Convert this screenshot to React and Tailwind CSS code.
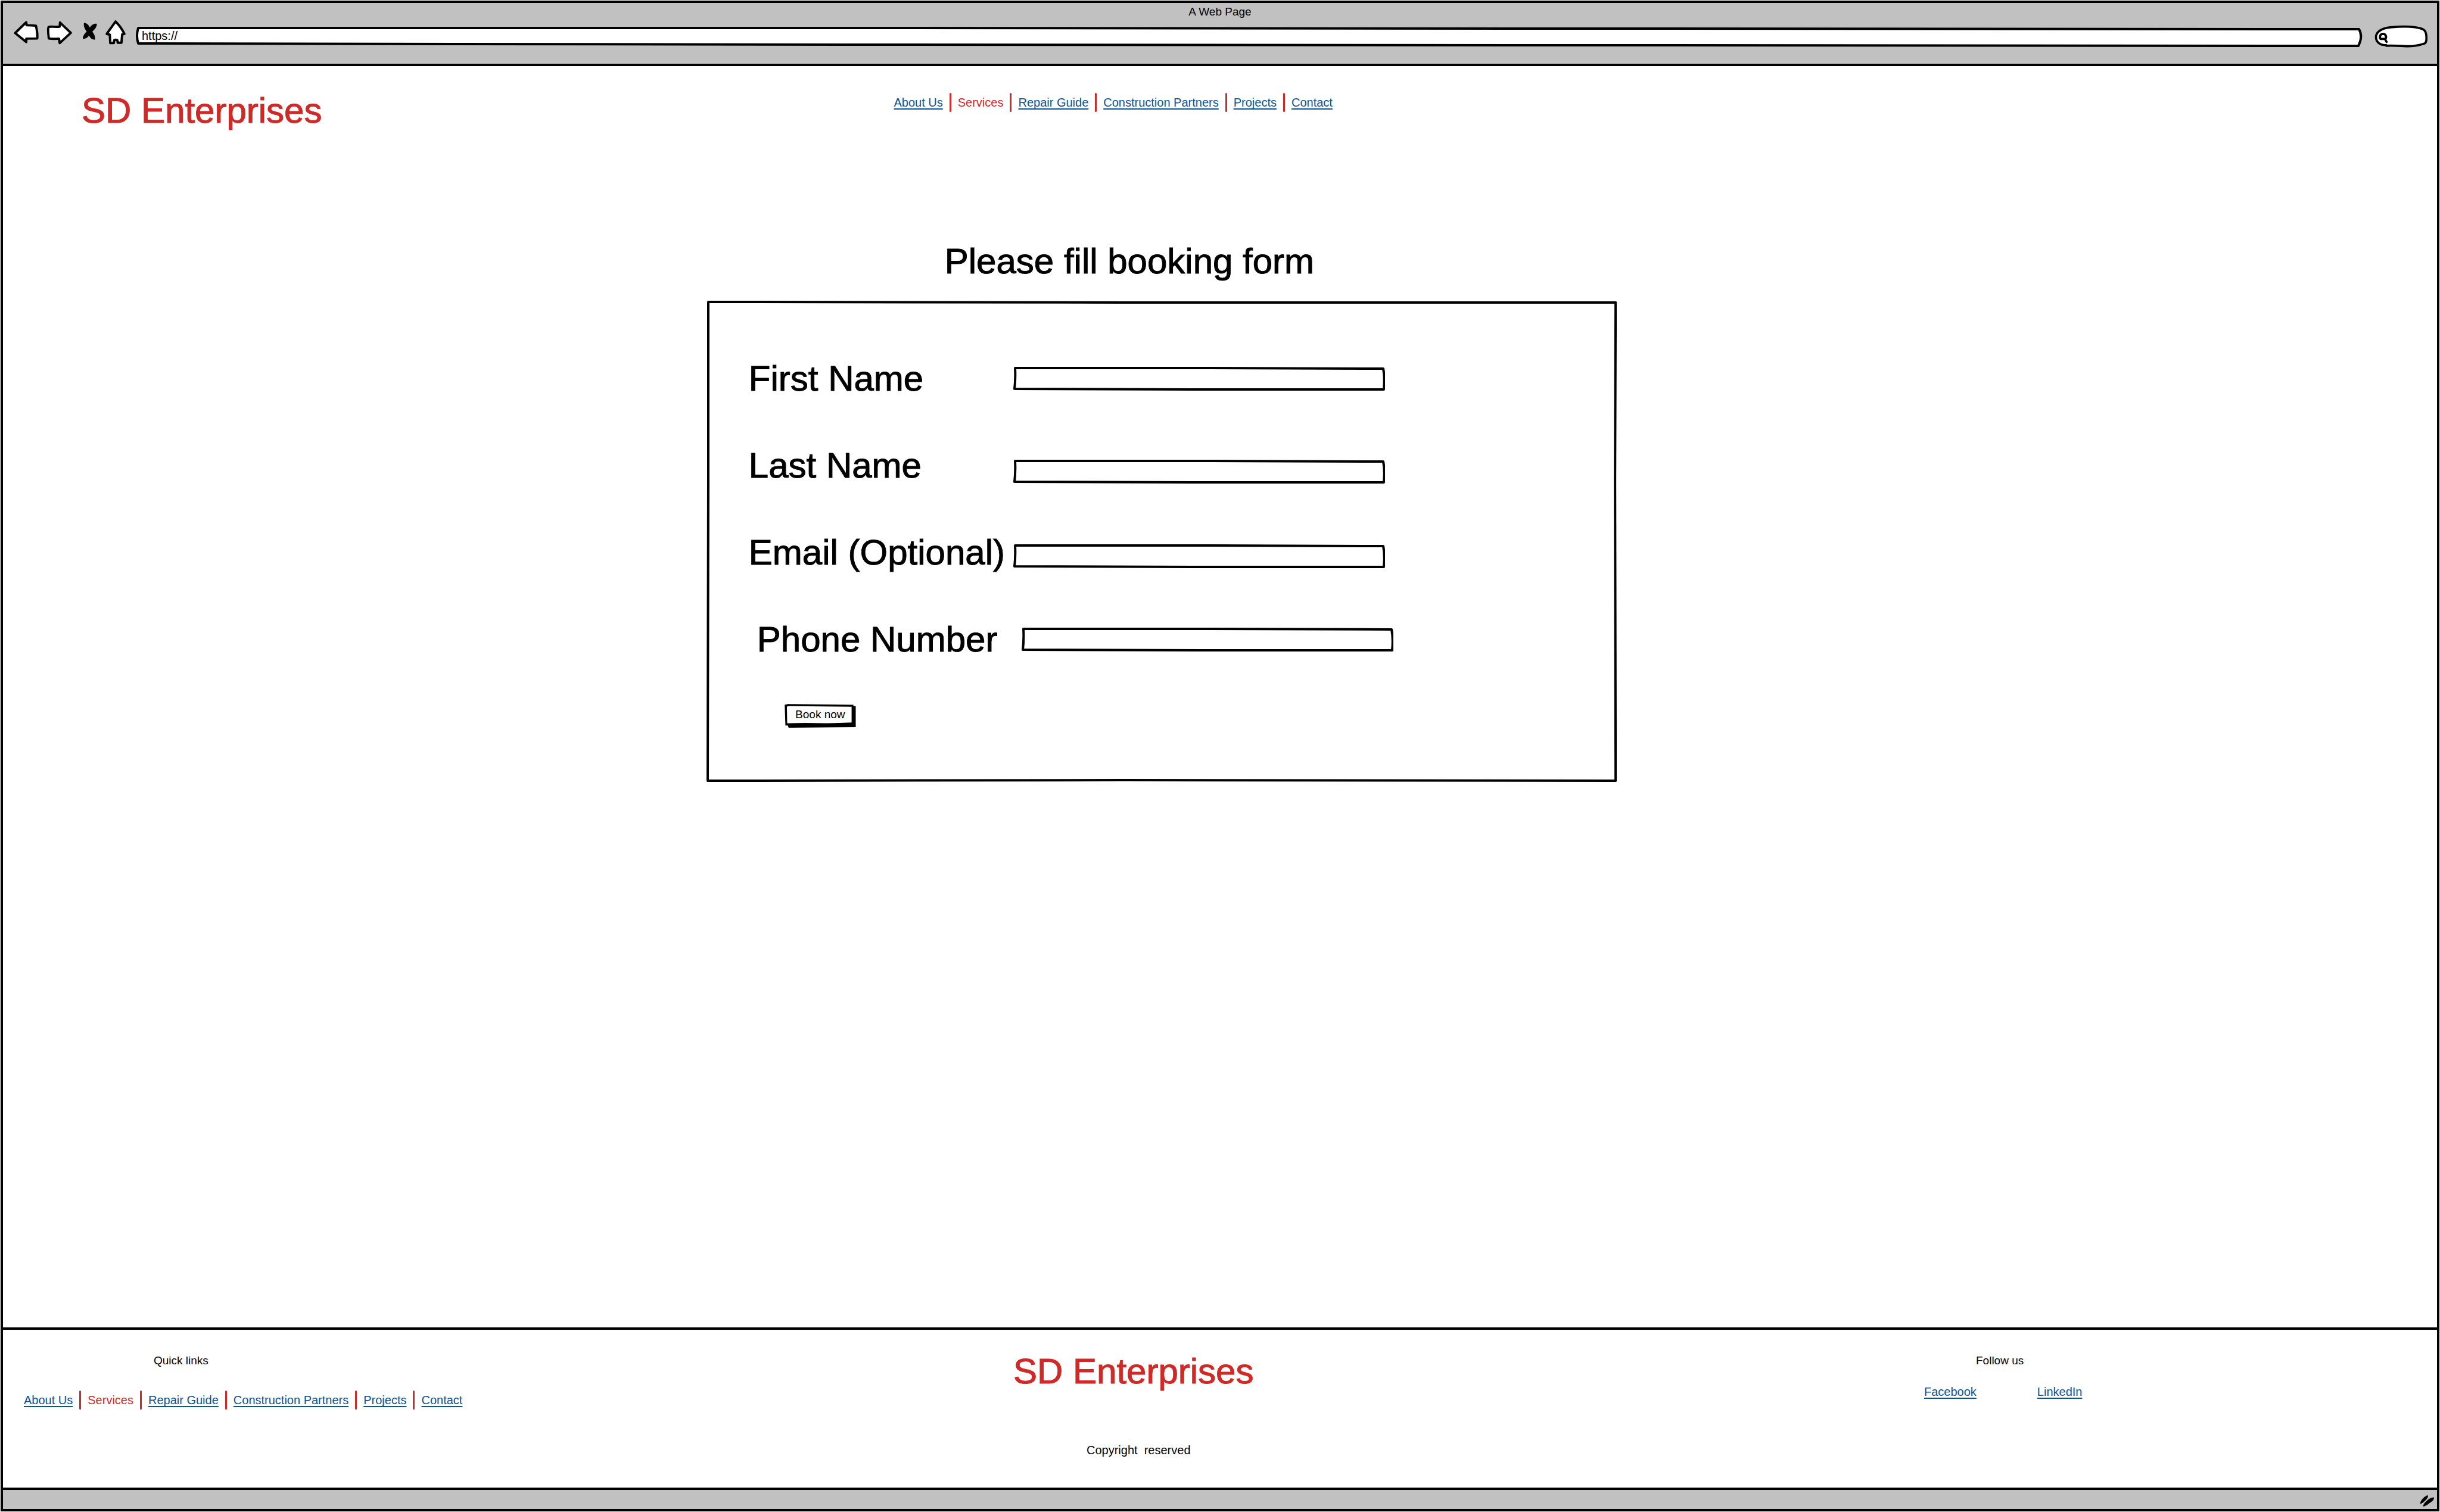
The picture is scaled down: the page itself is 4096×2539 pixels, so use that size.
import React from "react";

const LINKS = ["About Us", "Services", "Repair Guide", "Construction Partners", "Projects", "Contact"];

const FIELDS = [
  { id: "first-name", label: "First Name", type: "text", row: "items-center", input: "" },
  { id: "last-name", label: "Last Name", type: "text", row: "items-end", input: "" },
  { id: "email", label: "Email (Optional)", type: "email", row: "items-center", input: "mt-3" },
  { id: "phone", label: "Phone Number", type: "tel", row: "items-center pl-3.5", input: "" },
];

/* Hand-drawn outline that stretches with the box it sits in. */
function Sketch({ viewBox, d, fill = "white" }) {
  return (
    <svg
      aria-hidden="true"
      viewBox={viewBox}
      preserveAspectRatio="none"
      className="pointer-events-none absolute inset-0 h-full w-full"
    >
      <path
        d={d}
        fill={fill}
        stroke="black"
        strokeWidth="4"
        strokeLinejoin="round"
        vectorEffect="non-scaling-stroke"
      />
    </svg>
  );
}

function ToolIcon({ label, viewBox, size, children }) {
  return (
    <button type="button" aria-label={label} className={size}>
      <svg
        viewBox={viewBox}
        className="block h-full w-full"
        fill="white"
        stroke="black"
        strokeWidth="16"
        strokeLinejoin="round"
        strokeLinecap="round"
      >
        {children}
      </svg>
    </button>
  );
}

function BrowserBar() {
  return (
    <div className="border-b-4 border-black bg-[#c1c1c1] pt-[3px] pb-[27px]">
      <p className="text-center text-[19px] leading-6">A Web Page</p>
      <div className="flex h-12 items-end gap-4 pr-[15px] pl-[17px]">
        <div className="flex items-start gap-3 self-start">
          <ToolIcon label="Back" viewBox="30 40 176 174" size="h-[43px] w-11">
            <path d="M118 62 L43 135 L118 196 L119 173 L193 172 C195 145 190 110 184 85 Q150 82 121 82 Z" />
          </ToolIcon>
          <ToolIcon label="Forward" viewBox="252 40 182 174" size="h-[43px] w-11">
            <path d="M346 62 L421 134 L344 205 L339 174 Q300 178 268 173 C266 140 258 105 268 92 C290 88 320 96 344 90 Z" />
          </ToolIcon>
          <ToolIcon label="Stop" viewBox="484 40 120 174" size="h-[43px] w-[30px]">
            <path
              d="M511 66 C530 64 543 80 552 98 C562 80 578 70 599 72 C599 95 585 108 568 126 C582 142 588 158 587 180 C570 180 555 170 545 152 C536 166 522 175 504 174 C503 155 515 140 530 124 C516 106 508 88 511 66 Z"
              fill="black"
              stroke="none"
            />
          </ToolIcon>
          <ToolIcon label="Home" viewBox="648 40 144 174" size="h-[43px] w-9">
            <path d="M720 57 L660 141 L681 146 L684 203 L708 203 L711 184 Q721 177 732 184 L735 201 L760 201 L765 144 L780 141 C765 110 745 82 720 57 Z" />
          </ToolIcon>
        </div>
        <div className="relative h-9 min-w-0 flex-1">
          <Sketch
            viewBox="0 0 3740 36"
            d="M4 3 L1200 3 L3734 5 Q3741 17 3733 33 L1200 31 L4 29 Q0 16 4 3 Z"
          />
          <input
            aria-label="Address"
            defaultValue="https://"
            className="relative block h-full w-full bg-transparent pr-3 pb-1 pl-[10px] text-xl outline-none"
          />
        </div>
        <div className="relative ml-1 h-[38px] w-[90px]">
          <svg
            aria-hidden="true"
            viewBox="493 168 362 154"
            className="pointer-events-none absolute inset-0 h-full w-full"
            fill="none"
            stroke="black"
            strokeWidth="15"
            strokeLinecap="round"
            strokeLinejoin="round"
          >
            <path
              d="M572 305 C530 306 502 285 502 250 C502 215 540 190 600 184 C680 176 770 176 820 196 C842 206 846 235 845 262 C845 280 842 290 830 295 C790 307 745 315 700 312 C650 309 620 307 572 309 Z"
              fill="white"
            />
            <path d="M533 263 C523 245 532 228 550 228 C567 229 576 246 567 263 Z M564 266 L574 283" />
          </svg>
          <input
            type="search"
            aria-label="Search"
            className="relative block h-full w-full bg-transparent pr-3 pl-6 text-xl outline-none"
          />
        </div>
      </div>
    </div>
  );
}

function LinkBar({ label }) {
  return (
    <nav aria-label={label} className="flex h-8 items-center gap-[11px] text-xl whitespace-nowrap">
      {LINKS.map((name, i) => (
        <React.Fragment key={name}>
          {i > 0 && <span aria-hidden="true" className="h-8 w-[3px] rounded-full bg-[#cf2a27]" />}
          {name === "Services" ? (
            <a href="#services" aria-current="page" className="text-[#cf2a27]">
              {name}
            </a>
          ) : (
            <TextLink>{name}</TextLink>
          )}
        </React.Fragment>
      ))}
    </nav>
  );
}

function TextLink({ children }) {
  return (
    <a
      href="#top"
      className="text-[#0b5394] underline decoration-2 underline-offset-3 [text-decoration-skip-ink:none]"
    >
      {children}
    </a>
  );
}

function Brand() {
  return (
    <p className="text-[60px] leading-[60px] whitespace-nowrap text-[#cf2a27] [-webkit-text-stroke:1px]">
      SD Enterprises
    </p>
  );
}

function BookingForm() {
  return (
    <form className="relative mt-9 pt-[101px] pb-[91px] pl-[71px]" onSubmit={(e) => e.preventDefault()}>
      <Sketch
        viewBox="0 0 1528 808"
        d="M3 2 L700 3 L1526 3 L1525 300 L1526 806 L700 805 L2 806 L3 300 Z"
      />
      <div className="relative flex flex-col gap-[86px]">
        {FIELDS.map((f) => (
          <div key={f.id} className={`flex min-h-[60px] ${f.row}`}>
            <label
              htmlFor={f.id}
              className="w-[444px] shrink-0 self-start text-[60px] leading-[60px] whitespace-nowrap [-webkit-text-stroke:1px]"
            >
              {f.label}
            </label>
            <div className={`relative h-10 w-[624px] min-w-0 ${f.input}`}>
              <Sketch
                viewBox="0 0 624 40"
                d="M3 2 L300 2 L621 3 Q624 18 622 38 L300 38 L2 37 Q4 20 3 2 Z"
              />
              <input
                id={f.id}
                type={f.type}
                className="relative block h-full w-full bg-transparent px-3 text-xl outline-none"
              />
            </div>
          </div>
        ))}
      </div>
      <button type="submit" className="relative mt-[78px] ml-15 block h-10 w-[120px] pb-1 text-[19px]">
        <svg
          aria-hidden="true"
          viewBox="62 60 486 162"
          preserveAspectRatio="none"
          className="absolute inset-0 h-full w-full"
        >
          <path d="M63 66 L85 61 L530 66 L530 74 L546 76 L546 218 L90 222 L84 207 L68 207 Z" />
          <path fill="white" d="M78 78 Q85 75 100 75 L518 79 L518 187 Q430 191 350 192 Q200 187 80 192 Z" />
        </svg>
        <span className="relative">Book now</span>
      </button>
    </form>
  );
}

function Footer() {
  return (
    <footer className="grid grid-cols-[1696fr_1529fr_861fr] border-t-4 border-black pt-10 pb-[51px] text-[19px] leading-6">
      <div className="pl-[35px]">
        <h2 className="pl-[218px]">Quick links</h2>
        <div className="mt-[38px]">
          <LinkBar label="Quick links" />
        </div>
      </div>
      <div>
        <Brand />
        <p className="mt-[90px] pl-[123px] text-xl leading-6 whitespace-pre">{"Copyright  reserved"}</p>
      </div>
      <div>
        <h2 className="pl-[87px]">Follow us</h2>
        <div className="mt-7 flex gap-[102px] text-xl leading-6">
          <TextLink>Facebook</TextLink>
          <TextLink>LinkedIn</TextLink>
        </div>
      </div>
    </footer>
  );
}

export default function App() {
  return (
    <div
      id="top"
      className="flex min-h-screen flex-col bg-white p-px font-['Liberation_Sans',Arial,sans-serif] text-black"
    >
      <div className="flex flex-1 flex-col border-4 border-black">
        <BrowserBar />
        <header className="grid grid-cols-[366fr_634fr] pt-[45px]">
          <div className="pl-[132px]">
            <Brand />
          </div>
          <LinkBar label="Main" />
        </header>
        <main className="mt-[193px] ml-[28.9%] w-[37.4%] flex-1">
          <h1 className="pr-[108px] text-center text-[60px] leading-[60px] [-webkit-text-stroke:1px]">
            Please fill booking form
          </h1>
          <BookingForm />
        </main>
        <Footer />
        <div className="flex h-9 items-end justify-end border-t-4 border-black bg-[#c1c1c1] pr-1 pb-[3px]">
          <svg aria-hidden="true" viewBox="198 110 100 85" className="h-[21px] w-[25px]">
            <path d="M202 172 C198 158 212 142 224 130 C236 118 248 112 254 116 C256 126 246 138 234 150 C222 162 210 170 202 172 Z" />
            <path d="M222 190 C218 178 232 162 248 148 C264 134 284 124 295 130 C296 142 282 154 266 166 C250 178 234 190 222 190 Z" />
          </svg>
        </div>
      </div>
    </div>
  );
}
